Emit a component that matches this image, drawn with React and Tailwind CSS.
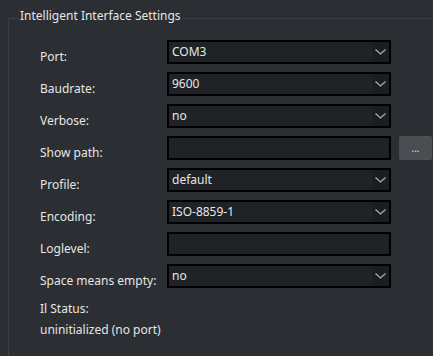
const rows = [
  { label: "Port:", kind: "combo", value: "COM3" },
  { label: "Baudrate:", kind: "combo", value: "9600" },
  { label: "Verbose:", kind: "combo", value: "no" },
  { label: "Show path:", kind: "text", value: "", browse: true },
  { label: "Profile:", kind: "combo", value: "default" },
  { label: "Encoding:", kind: "combo", value: "ISO-8859-1" },
  { label: "Loglevel:", kind: "text", value: "" },
  { label: "Space means empty:", kind: "combo", value: "no" },
];

function Chevron() {
  return (
    <svg width="11" height="6" viewBox="0 0 11 6" fill="none">
      <polyline
        points="0.5,0.5 5.5,5 10.5,0.5"
        stroke="#a9abae"
        strokeWidth="1.3"
      />
    </svg>
  );
}

function Field({ kind, value }) {
  return (
    <div className="flex h-6 w-[224px] items-stretch border-2 border-black bg-[#1f2226]">
      <span className="flex-1 truncate pl-[3px] leading-5">{value}</span>
      {kind === "combo" && (
        <span className="flex w-[17px] items-center justify-center bg-[#1b1d20]">
          <Chevron />
        </span>
      )}
    </div>
  );
}

function App() {
  return (
    <div
      className="h-[356px] w-[433px] overflow-hidden bg-[#2b2e32] pt-2 pl-2 text-[12px] text-[#e6e6e6]"
      style={{ fontFamily: '"Noto Sans", "Open Sans", sans-serif' }}
    >
      <fieldset className="h-[400px] border-t border-l border-[#3c3f43] p-0">
        <legend className="ml-[10px] px-[1px] pb-1 leading-4">
          Intelligent Interface Settings
        </legend>
        <div className="grid grid-cols-[119px_224px_33px] gap-x-2 pt-3 pl-[31px]">
          {rows.map((row) => (
            <div key={row.label} className="contents">
              <div className="flex h-8 items-center pt-[1px] whitespace-nowrap">
                {row.label}
              </div>
              <div className="h-8">
                <Field kind={row.kind} value={row.value} />
              </div>
              <div className="h-8">
                {row.browse && (
                  <button className="flex h-6 w-[33px] items-center justify-center rounded-[2px] bg-[#4a4d51] text-[10px] leading-none text-[#e6e6e6]">
                    ...
                  </button>
                )}
              </div>
            </div>
          ))}
        </div>
        <div className="pt-[5px] pl-[31px] leading-4">
          <p>Il Status:</p>
          <p className="mt-[5px]">uninitialized (no port)</p>
        </div>
      </fieldset>
    </div>
  );
}

export default App;
